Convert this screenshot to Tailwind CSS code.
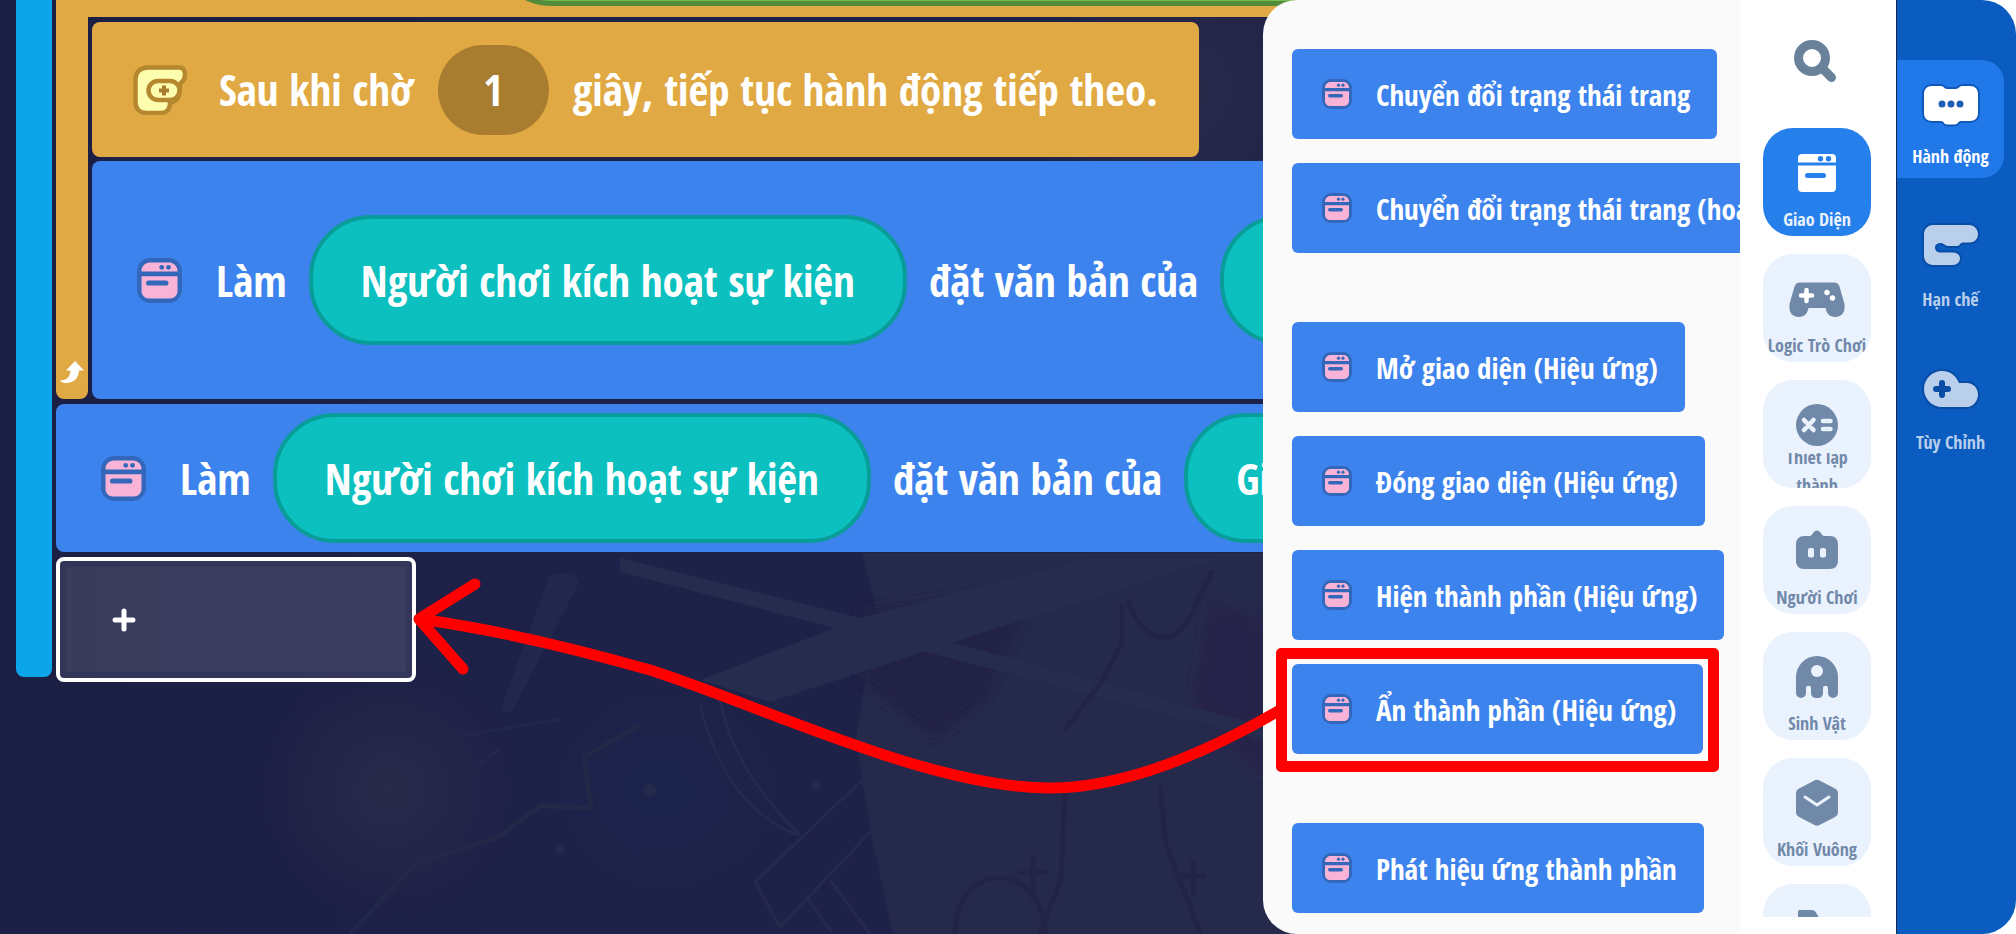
<!DOCTYPE html>
<html lang="vi">
<head>
    <meta charset="UTF-8">
    <meta name="viewport" content="width=device-width, initial-scale=1.0">
    <title>Trình soạn thảo khối lệnh</title>
    <script src="https://cdn.jsdelivr.net/npm/@tailwindcss/browser@4"></script>
</head>
<body class="bg-white font-['Noto_Sans_Condensed','Open_Sans_Condensed','Noto_Sans',sans-serif] font-semibold">
    <!-- Shared icons -->
    <svg class="hidden" aria-hidden="true">
        <symbol id="icon-window" viewBox="0 0 30 30">
            <rect width="30" height="30" rx="9" fill="#3267b9"/>
            <path d="M3 9V8.500C3 5.500 5.500 3 8.500 3h13C24.500 3 27 5.500 27 8.500V9zM3 12.200h24V22c0 2.800-2.200 5-5 5H8c-2.800 0-5-2.200-5-5z" fill="#f8b3d6"/>
            <circle cx="16.500" cy="6.200" r="1.600" fill="#3267b9"/>
            <circle cx="21" cy="6.200" r="1.600" fill="#3267b9"/>
            <rect x="6" y="15" width="15" height="3.400" rx="1.700" fill="#3267b9"/>
        </symbol>
    </svg>

    <div class="relative flex h-screen overflow-hidden">
        <!-- Canvas -->
        <main class="relative min-w-0 flex-1 overflow-hidden bg-[#1e2148] pl-4 text-white">
            <svg class="absolute inset-0 h-full w-full" viewBox="0 0 1303 934" preserveAspectRatio="xMinYMin slice" fill="none" aria-hidden="true">
                <defs>
                    <radialGradient id="glow"><stop stop-color="#292a4a"/><stop offset="1" stop-color="#292a4a" stop-opacity="0"/></radialGradient>
                    <radialGradient id="blue"><stop stop-color="#1c244b"/><stop offset="1" stop-color="#1c244b" stop-opacity="0"/></radialGradient>
                    <linearGradient id="left"><stop stop-color="#1b1f43"/><stop offset="1" stop-color="#1e2149"/></linearGradient>
                    <filter id="soft"><feGaussianBlur stdDeviation="6"/></filter>
                </defs>
                <path fill="url(#left)" d="M0 0h640v934H0z"/>
                <ellipse cx="390" cy="790" rx="130" ry="130" fill="url(#glow)"/>
                <ellipse cx="660" cy="790" rx="180" ry="150" fill="url(#blue)"/>
                <ellipse cx="1180" cy="90" rx="170" ry="170" fill="url(#glow)"/>
                <path d="M862 553h441v381H893l-22-100-15-95 20-130z" fill="#252a4c"/>
                <path d="M860 610l150-20 15 25-40 85-50 40-75-60z" fill="#242144" filter="url(#soft)"/>
                <path d="M1210 600l53 20v160l-70-80z" fill="#26244a" filter="url(#soft)"/>
                <path d="M620 558l240 60 403 108v14L900 645 620 572zM700 680l160-62 230-60h130L960 640l-190 62z" fill="#262c4e"/>
                <path d="M700 705c15 60 45 110 98 130M720 700c10 50 35 90 80 135M862 780l-107 102 25 45 95-100zM830 880l40 54M805 895l28 39" stroke="#252a4d" stroke-width="3"/>
                <path d="M955 934c0-75 88-75 90 0M1065 790l-4 90-22 54M1160 785l6 60 35 89M1122 605v38l-20 38-38 50M1128 600c15 45 50 55 70 0l15-30M1018 872h30M1033 855v45M1180 876h26M1193 860v36" stroke="#232347" stroke-width="5"/>
                <path d="M550 575c15-5 30 0 28 10l-65 125c-8 5-12 0-11-5z" fill="#22284b"/>
                <path d="M640 725l-56 32 7 51-50-2-45 32-80 25-60 65" stroke="#232849" stroke-width="5"/>
                <path d="M460 736l100-17M500 748l-50 40M390 890l-40 44" stroke="#21264a" stroke-width="4"/>
                <circle cx="560" cy="850" r="5" fill="#252a4c"/>
                <circle cx="650" cy="790" r="6" fill="#252a4c"/>
                <circle cx="816" cy="785" r="5" fill="#252a4c"/>
            </svg>

            <div class="relative flex gap-1">
                <div class="mb-[5px] w-9 shrink-0 rounded-b-lg bg-[#0ca5e9]"></div>

                <div class="flex min-w-0 flex-1 flex-col gap-[5px] text-[43px] leading-none whitespace-nowrap">
                    <!-- Loop block -->
                    <section class="flex flex-col">
                        <div class="flex h-[17px] items-start overflow-hidden bg-[#e1a943] pl-[432px]">
                            <div class="-mt-[124px] h-[130px] flex-1 rounded-l-[64px] border-[5px] border-r-0 border-[#528b3c] bg-[#70bf4b]"></div>
                        </div>
                        <div class="flex gap-1">
                            <div class="flex w-8 shrink-0 items-end justify-center rounded-b-lg bg-[#e1a943] pb-4">
                                <svg class="h-[22px] w-6" viewBox="0 0 24 22" fill="#fff"><path d="M15 0l9 9.500h-5c0 8-6 12.500-13 12.500-4 0-6-2-6-2.500 6 0 10-3 10.500-10H6z"/></svg>
                            </div>
                            <div class="flex min-w-0 flex-1 flex-col gap-1 pt-[5px]">
                                <div class="flex h-[135px] w-max items-center gap-6 rounded-lg bg-[#e1a943] px-[41px]">
                                    <svg class="mr-2 h-[50px] w-[54px] shrink-0" viewBox="0 0 54 50">
                                        <path d="M15 2.500h31c6 0 7 6 5 12-1 2-4 3-4 5 0 12-2 17-10 18 0 6-3 10.500-9 10.500H14c-7 0-11.500-4-11.500-11V14c0-7 5-11.500 12.500-11.500z" fill="#fdfdb0" stroke="#b5872f" stroke-width="4.500"/>
                                        <rect x="15.500" y="16" width="31" height="19" rx="9.500" fill="#fdfdb0" stroke="#b5872f" stroke-width="4.500"/>
                                        <path d="M31 20.500v10M26 25.500h10" stroke="#a87d30" stroke-width="4"/>
                                    </svg>
                                    <span>Sau khi chờ</span>
                                    <input type="text" value="1" aria-label="Số giây" class="h-[90px] w-[111px] rounded-[45px] bg-[#a87d30] text-center">
                                    <span>giây, tiếp tục hành động tiếp theo.</span>
                                </div>
                                <div class="flex w-max items-center gap-[22px] rounded-lg bg-[#3d83ee] py-[54px] pl-[45px]">
                                    <svg class="mr-3 h-[45px] w-[45px] shrink-0"><use href="#icon-window"/></svg>
                                    <span>Làm</span>
                                    <button class="h-[130px] rounded-[62px] border-4 border-[#099c99] bg-[#0bc0be] px-12">Người chơi kích hoạt sự kiện</button>
                                    <span>đặt văn bản của</span>
                                    <button class="h-[130px] rounded-[62px] border-4 border-[#099c99] bg-[#0bc0be] px-12">Giao diện</button>
                                </div>
                            </div>
                        </div>
                    </section>

                    <div class="flex w-max items-center gap-[22px] rounded-lg bg-[#3d83ee] py-[9px] pl-[45px]">
                        <svg class="mr-3 h-[45px] w-[45px] shrink-0"><use href="#icon-window"/></svg>
                        <span>Làm</span>
                        <button class="h-[130px] rounded-[62px] border-4 border-[#099c99] bg-[#0bc0be] px-12">Người chơi kích hoạt sự kiện</button>
                        <span>đặt văn bản của</span>
                        <button class="h-[130px] rounded-[62px] border-4 border-[#099c99] bg-[#0bc0be] px-12">Giao diện</button>
                    </div>

                    <button aria-label="Thêm hành động" class="flex h-[125px] w-[360px] rounded-lg border-4 border-white bg-white/10 p-[6px]">
                        <span class="flex h-full w-full items-center bg-white/4 pl-[46px]">
                            <svg class="h-6 w-6" viewBox="0 0 24 24" stroke="#fff" stroke-width="5" stroke-linecap="round"><path d="M12 3v18M3 12h18"/></svg>
                        </span>
                    </button>
                </div>
            </div>
        </main>

        <!-- Action list -->
        <section class="relative -ml-10 w-[477px] shrink-0 overflow-hidden rounded-l-[34px] bg-[#fafafa] text-[29px] leading-none whitespace-nowrap text-white">
            <div class="flex flex-col items-start gap-[69px] pt-[49px] pl-[29px]">
                <div class="flex flex-col items-start gap-6">
                    <button class="flex h-[90px] items-center gap-6 rounded-md bg-[#3d83ee] pr-[27px] pl-[30px]"><svg class="h-[30px] w-[30px]"><use href="#icon-window"/></svg>Chuyển đổi trạng thái trang</button>
                    <button class="flex h-[90px] items-center gap-6 rounded-md bg-[#3d83ee] pr-[27px] pl-[30px]"><svg class="h-[30px] w-[30px] shrink-0"><use href="#icon-window"/></svg>Chuyển đổi trạng thái trang (hoạt ảnh)</button>
                </div>
                <div class="flex flex-col items-start gap-6">
                    <button class="flex h-[90px] items-center gap-6 rounded-md bg-[#3d83ee] pr-[27px] pl-[30px]"><svg class="h-[30px] w-[30px]"><use href="#icon-window"/></svg>Mở giao diện (Hiệu ứng)</button>
                    <button class="flex h-[90px] items-center gap-6 rounded-md bg-[#3d83ee] pr-[27px] pl-[30px]"><svg class="h-[30px] w-[30px]"><use href="#icon-window"/></svg>Đóng giao diện (Hiệu ứng)</button>
                    <button class="flex h-[90px] items-center gap-6 rounded-md bg-[#3d83ee] pr-[27px] pl-[30px]"><svg class="h-[30px] w-[30px]"><use href="#icon-window"/></svg>Hiện thành phần (Hiệu ứng)</button>
                    <div class="relative">
                        <button class="flex h-[90px] items-center gap-6 rounded-md bg-[#3d83ee] pr-[27px] pl-[30px]"><svg class="h-[30px] w-[30px]"><use href="#icon-window"/></svg>Ẩn thành phần (Hiệu ứng)</button>
                        <div class="pointer-events-none absolute -inset-x-4 -top-4 -bottom-[18px] rounded-[5px] border-[11px] border-[#ff0000]"></div>
                    </div>
                </div>
                <button class="flex h-[90px] items-center gap-6 rounded-md bg-[#3d83ee] pr-[27px] pl-[30px]"><svg class="h-[30px] w-[30px]"><use href="#icon-window"/></svg>Phát hiệu ứng thành phần</button>
            </div>
        </section>

        <!-- Categories -->
        <nav class="flex w-[156px] shrink-0 flex-col items-center bg-white pr-[2px] pb-[17px] text-[18px] leading-7">
            <button aria-label="Tìm kiếm" class="mt-10 mr-1 mb-[46px] shrink-0">
                <svg class="h-[42px] w-[42px]" viewBox="0 0 42 42" fill="none" stroke="#6a8299"><circle cx="18" cy="18" r="13.500" stroke-width="9"/><path d="M28 28l9.500 9.500" stroke-width="9" stroke-linecap="round"/></svg>
            </button>
            <div class="flex min-h-0 flex-1 flex-col gap-[18px] overflow-hidden text-[#7189a9]">
                <button class="flex h-[108px] w-[108px] shrink-0 flex-col items-center overflow-hidden rounded-[30px] bg-[#2680eb] pt-[21px] text-[#eaf2fe]">
                    <svg class="h-12 w-14 shrink-0" viewBox="0 0 56 48"><path d="M9 13.500V9c0-2.500 1.500-4 4-4h30c2.500 0 4 1.500 4 4v4.500zM9 16.500h38V39c0 2.500-1.500 4-4 4H13c-2.500 0-4-1.500-4-4z" fill="#fff"/><circle cx="31.500" cy="9.700" r="2.700" fill="#2680eb"/><circle cx="39.500" cy="9.700" r="2.700" fill="#2680eb"/><rect x="16" y="24" width="21" height="5" rx="2.500" fill="#2680eb"/></svg>
                    <span class="mt-1 flex h-[35px] w-full items-center justify-center overflow-hidden">Giao Diện</span>
                </button>
                <button class="flex h-[108px] w-[108px] shrink-0 flex-col items-center overflow-hidden rounded-[30px] bg-[#eaf2fe] pt-[21px]">
                    <svg class="h-12 w-14 shrink-0" viewBox="0 0 56 48"><path d="M11 7.500h34c3 0 4.500 1.500 5.500 4L55.500 29v4c0 5.500-4 9-9 9-6.500 0-9-4-10-9H19.500c-1 5-3.500 9-10 9-5 0-9-3.500-9-9v-4l5-17.500c1-2.500 2.500-4 5.500-4z" fill="#7189a9"/><path d="M17.500 15v11M12 20.500h11" stroke="#fff" stroke-width="4.500" stroke-linecap="round"/><circle cx="38" cy="17.500" r="2.700" fill="#fff"/><circle cx="43.500" cy="23" r="2.700" fill="#fff"/></svg>
                    <span class="mt-1 flex h-[35px] w-full items-center justify-center whitespace-nowrap">Logic Trò Chơi</span>
                </button>
                <button class="flex h-[108px] w-[108px] shrink-0 flex-col items-center overflow-hidden rounded-[30px] bg-[#eaf2fe] pt-[21px]">
                    <svg class="h-12 w-14 shrink-0" viewBox="0 0 56 48"><circle cx="28" cy="24" r="21" fill="#7189a9"/><path d="M15 19l9.500 10M24.500 19L15 29M34 20h7.500M34 28h7.500" stroke="#eaf2fe" stroke-width="4.500" stroke-linecap="round"/></svg>
                    <span class="mt-1 flex h-[35px] w-full items-center justify-center overflow-hidden">Thiết lập<br>thành</span>
                </button>
                <button class="flex h-[108px] w-[108px] shrink-0 flex-col items-center overflow-hidden rounded-[30px] bg-[#eaf2fe] pt-[21px]">
                    <svg class="h-12 w-14 shrink-0" viewBox="0 0 56 48"><path d="M15 9h6c2 0 3.500-5.500 7-5.500S33 9 35 9h6c5 0 8 3.500 8 8v17c0 5-3.500 8-8 8H15c-5 0-8-3.500-8-8V17c0-5 3.500-8 8-8z" fill="#7189a9"/><rect x="19" y="21" width="6" height="9.500" rx="2" fill="#eaf2fe"/><rect x="31" y="21" width="6" height="9.500" rx="2" fill="#eaf2fe"/></svg>
                    <span class="mt-1 flex h-[35px] w-full items-center justify-center whitespace-nowrap">Người Chơi</span>
                </button>
                <button class="flex h-[108px] w-[108px] shrink-0 flex-col items-center overflow-hidden rounded-[30px] bg-[#eaf2fe] pt-[21px]">
                    <svg class="h-12 w-14 shrink-0" viewBox="0 0 56 48"><path d="M7 24a21 21 0 0142 0v16a5 5 0 01-10 0v-5c0-3-5-3-5 0v5c0 3-2 5-6 5s-6-2-6-5v-5c0-3-5-3-5 0v5a5 5 0 01-10 0z" fill="#7189a9"/><circle cx="28" cy="18" r="6" fill="#eaf2fe"/></svg>
                    <span class="mt-1 flex h-[35px] w-full items-center justify-center">Sinh Vật</span>
                </button>
                <button class="flex h-[108px] w-[108px] shrink-0 flex-col items-center overflow-hidden rounded-[30px] bg-[#eaf2fe] pt-[21px]">
                    <svg class="h-12 w-14 shrink-0" viewBox="0 0 56 48"><path d="M25.500 1.500q2.500-1.500 5 0l15.500 8q3 1.600 3 5v18.500q0 3.400-3 5l-15.500 8q-2.500 1.500-5 0L10 38q-3-1.600-3-5V14.500q0-3.400 3-5z" fill="#7189a9"/><path d="M16 18l12 8 12-8" fill="none" stroke="#eaf2fe" stroke-width="3" stroke-linecap="round"/></svg>
                    <span class="mt-1 flex h-[35px] w-full items-center justify-center whitespace-nowrap">Khối Vuông</span>
                </button>
                <button aria-label="Tệp" class="flex h-[108px] w-[108px] shrink-0 flex-col items-center overflow-hidden rounded-[30px] bg-[#eaf2fe] pt-[21px]">
                    <svg class="h-12 w-14 shrink-0" viewBox="0 0 56 48"><path d="M9 7c0-1.500 1-2 2-2h12c2 0 3 1 4 2.500l4 7h12c2.500 0 4 1.500 4 4V39c0 2.500-1.500 4-4 4H13c-2.500 0-4-1.500-4-4z" fill="#7189a9"/></svg>
                </button>
            </div>
        </nav>

        <!-- Tabs -->
        <nav class="flex w-[120px] shrink-0 flex-col items-start gap-[25px] rounded-r-[34px] border-l border-[#12294f] bg-[#0b5cc0] pt-[60px] text-[18px] leading-7 text-[#b9cfec]">
            <button class="flex h-[118px] w-[107px] flex-col items-center rounded-r-[22px] bg-[#2178e9] pt-5 text-white">
                <svg class="h-[50px] w-[62px]" viewBox="0 0 62 50"><path d="M12 6h9c3 0 3 3 6 3h9c3 0 3-3 6-3h8c5 0 8 3 8 8v19c0 5-3 8-8 8h-9c-3 0-3 3.500-6 3.500h-8c-3 0-3-3.500-6-3.500h-9c-5 0-8-3-8-8V14c0-5 3-8 8-8z" fill="#fff" stroke="#1159b8" stroke-width="4" paint-order="stroke"/><circle cx="22" cy="24" r="3.500" fill="#1c5db8"/><circle cx="31" cy="24" r="3.500" fill="#1c5db8"/><circle cx="40" cy="24" r="3.500" fill="#1c5db8"/></svg>
                <span class="mt-3">Hành động</span>
            </button>
            <button class="flex h-[118px] w-[107px] flex-col items-center pt-5">
                <svg class="h-[50px] w-[62px]" viewBox="0 0 62 50"><path d="M13 2h36c5 0 9 4 9 9s-4 8.500-8 8.500h-7c-3 0-3 3.500-6 3.500h-9c-3 0-4-3-7-3-4 0-6 1.500-6 4.500s2 5 6 5h12c4 0 7 2.500 7 6s-3 6.500-7 6.500H13c-5 0-9-4-9-9V11c0-5 4-9 9-9z" fill="#b9cfec" stroke="#094da6" stroke-width="4" paint-order="stroke"/></svg>
                <span class="mt-3">Hạn chế</span>
            </button>
            <button class="flex h-[118px] w-[107px] flex-col items-center pt-5">
                <svg class="h-[50px] w-[62px]" viewBox="0 0 62 50"><path d="M22 5c9 0 14 5 17 12h8c6 0 11 5 11 11.500S53 41 47 41H22C12 41 4 33 4 23S12 5 22 5z" fill="#b9cfec" stroke="#094da6" stroke-width="4" paint-order="stroke"/><path d="M22 17v12M16 23h12" stroke="#094da6" stroke-width="6" stroke-linecap="round"/></svg>
                <span class="mt-3">Tùy Chỉnh</span>
            </button>
        </nav>

        <!-- Drag hint arrow -->
        <svg class="pointer-events-none absolute top-0 left-0 h-[934px] w-[1300px]" viewBox="0 0 1300 934" fill="none" stroke="#ff0000" stroke-width="11" stroke-linecap="round" stroke-linejoin="round" aria-hidden="true">
            <path d="M419 619C500 630 580 650 650 670C760 705 930 788 1050 788C1130 788 1215 748 1280 710M475 584L419 619l44 50"/>
        </svg>
    </div>
</body>
</html>
